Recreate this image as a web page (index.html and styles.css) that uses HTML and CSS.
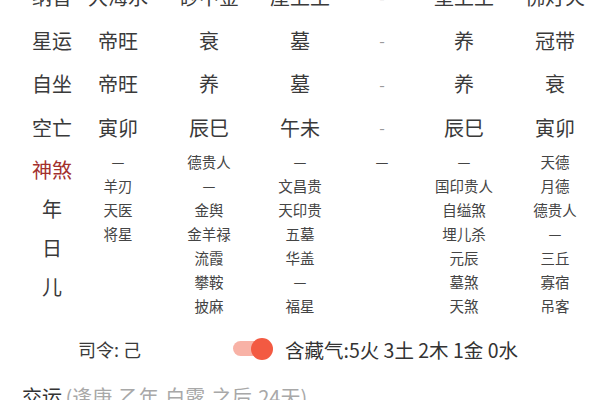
FILE: index.html
```html
<!DOCTYPE html>
<html lang="zh-CN">
<head>
<meta charset="utf-8">
<link rel="stylesheet" href="styles.css">
</head>
<body>
<div class="page">
  <div class="grid rows">
    <div class="lbl">纳音</div><div>大海水</div><div>砂中金</div><div>屋上土</div><div class="dash">-</div><div>壁上土</div><div>佛灯火</div>
    <div class="lbl">星运</div><div>帝旺</div><div>衰</div><div>墓</div><div class="dash">-</div><div>养</div><div>冠带</div>
    <div class="lbl">自坐</div><div>帝旺</div><div>养</div><div>墓</div><div class="dash">-</div><div>养</div><div>衰</div>
    <div class="lbl">空亡</div><div>寅卯</div><div>辰巳</div><div>午未</div><div class="dash">-</div><div>辰巳</div><div>寅卯</div>
  </div>
  <div class="grid shensha">
    <div class="labels"><span class="red">神煞</span><span>年</span><span>日</span><span>儿</span></div>
    <div class="list"><span>—</span><span>羊刃</span><span>天医</span><span>将星</span></div>
    <div class="list"><span>德贵人</span><span>—</span><span>金舆</span><span>金羊禄</span><span>流霞</span><span>攀鞍</span><span>披麻</span></div>
    <div class="list"><span>—</span><span>文昌贵</span><span>天印贵</span><span>五墓</span><span>华盖</span><span>—</span><span>福星</span></div>
    <div class="list"><span>—</span></div>
    <div class="list"><span>—</span><span>国印贵人</span><span>自缢煞</span><span>埋儿杀</span><span>元辰</span><span>墓煞</span><span>天煞</span></div>
    <div class="list"><span>天德</span><span>月德</span><span>德贵人</span><span>—</span><span>三丘</span><span>寡宿</span><span>吊客</span></div>
  </div>
  <div class="footer">
    <div class="siling">司令: 己</div>
    <div class="toggle"><span class="track"></span><span class="knob"></span></div>
    <div class="cang">含藏气:5火 3土 2木 1金 0水</div>
  </div>
  <div class="jiaoyun"><span class="jy">交运</span> <span class="jy-sub">(逢庚 乙年 白露 之后 24天)</span></div>
</div>
</body>
</html>
```
FILE: styles.css
```css
html, body {
  margin: 0;
  padding: 0;
  background: #ffffff;
  overflow: hidden;
}
.page {
  width: 600px;
  height: 400px;
  overflow: hidden;
  font-family: "Noto Sans CJK SC", "Noto Sans", sans-serif;
  color: #3a3a3a;
}
.grid {
  display: grid;
  grid-template-columns: 66px 66px 116px 66px 98px 66px 116px;
  padding-left: 19px;
}
.rows {
  margin-top: -25px;
  grid-auto-rows: 43.5px;
  font-size: 20px;
}
.rows > div {
  display: flex;
  align-items: center;
  justify-content: center;
  white-space: nowrap;
}
.rows .dash {
  color: #9a9a9a;
  font-size: 16px;
}
.shensha {
  margin-top: 1px;
  height: 168px;
}
.labels {
  display: flex;
  flex-direction: column;
  align-items: center;
  font-size: 20px;
  line-height: 39px;
}
.red {
  color: #a3302d;
}
.list {
  display: flex;
  flex-direction: column;
  align-items: center;
  font-size: 14.5px;
  line-height: 24px;
  color: #444;
  white-space: nowrap;
}
.footer {
  display: flex;
  align-items: center;
  height: 62px;
  padding-left: 78px;
}
.siling {
  width: 155px;
  font-size: 18px;
  color: #3a3a3a;
}
.toggle {
  position: relative;
  width: 40px;
  height: 24px;
  margin-right: 12px;
}
.track {
  position: absolute;
  left: 0;
  top: 4px;
  width: 32px;
  height: 15px;
  border-radius: 8px;
  background: #f8b2a6;
}
.knob {
  position: absolute;
  left: 18px;
  top: 1px;
  width: 22px;
  height: 22px;
  border-radius: 50%;
  background: #f35a42;
}
.cang {
  font-size: 19.5px;
  color: #333;
  white-space: nowrap;
}
.jiaoyun {
  padding-left: 22px;
  margin-top: 3px;
  white-space: nowrap;
  line-height: 28px;
}
.jy {
  font-size: 20px;
  color: #333;
}
.jy-sub {
  font-size: 20px;
  color: #a8a8a8;
  word-spacing: 2px;
}
```
